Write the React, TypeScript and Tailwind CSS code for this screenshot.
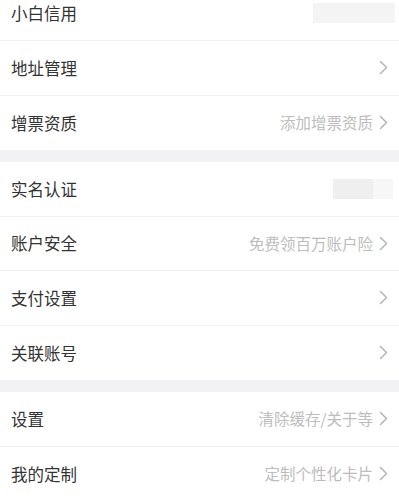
import React from 'react';

type Row = { label: string; hint?: string; arrow?: boolean; blur?: 'a' | 'b' };

const GROUPS: Row[][] = [
  [
    { label: '小白信用', blur: 'a' },
    { label: '地址管理', arrow: true },
    { label: '增票资质', hint: '添加增票资质', arrow: true },
  ],
  [
    { label: '实名认证', blur: 'b' },
    { label: '账户安全', hint: '免费领百万账户险', arrow: true },
    { label: '支付设置', arrow: true },
    { label: '关联账号', arrow: true },
  ],
  [
    { label: '设置', hint: '清除缓存/关于等', arrow: true },
    { label: '我的定制', hint: '定制个性化卡片', arrow: true },
  ],
];

function Chevron() {
  return (
    <svg width="9" height="15" viewBox="0 0 9 15" className="shrink-0">
      <path d="M1.5 1.5 L7.5 7.5 L1.5 13.5" fill="none" stroke="#b4b4b4" strokeWidth="1.5" strokeLinecap="round" strokeLinejoin="round" />
    </svg>
  );
}

export default function App() {
  return (
    <div
      className="w-[399px] h-[501px] overflow-hidden bg-white"
      style={{ fontFamily: '"Noto Sans CJK SC", "Noto Sans", sans-serif' }}
    >
      <div className="-mt-[13.5px]">
        {GROUPS.map((g, gi) => (
          <div key={gi} className={gi > 0 ? 'border-t-[12px] border-[#f2f2f4]' : ''}>
            {g.map((r, ri) => (
              <div
                key={r.label}
                className={`h-[54.5px] flex items-center justify-between pl-[11px] pr-[11px] bg-white ${ri < g.length - 1 ? 'border-b border-[#f1f1f1]' : ''}`}
              >
                <span className="text-[16.5px] text-[#333333] leading-none">{r.label}</span>
                <div className="flex items-center gap-[6px]">
                  {r.hint && <span className="text-[15.5px] text-[#bdbdbd] leading-none">{r.hint}</span>}
                  {r.arrow && <Chevron />}
                  {r.blur === 'a' && <div className="w-[82px] h-[20px] bg-[#f4f4f4] -mr-[7px]" />}
                  {r.blur === 'b' && (
                    <div className="flex -mr-[5px]">
                      <div className="w-[40px] h-[20px] bg-[#efefef]" />
                      <div className="w-[20px] h-[20px] bg-[#f7f7f7]" />
                    </div>
                  )}
                </div>
              </div>
            ))}
          </div>
        ))}
      </div>
    </div>
  );
}
